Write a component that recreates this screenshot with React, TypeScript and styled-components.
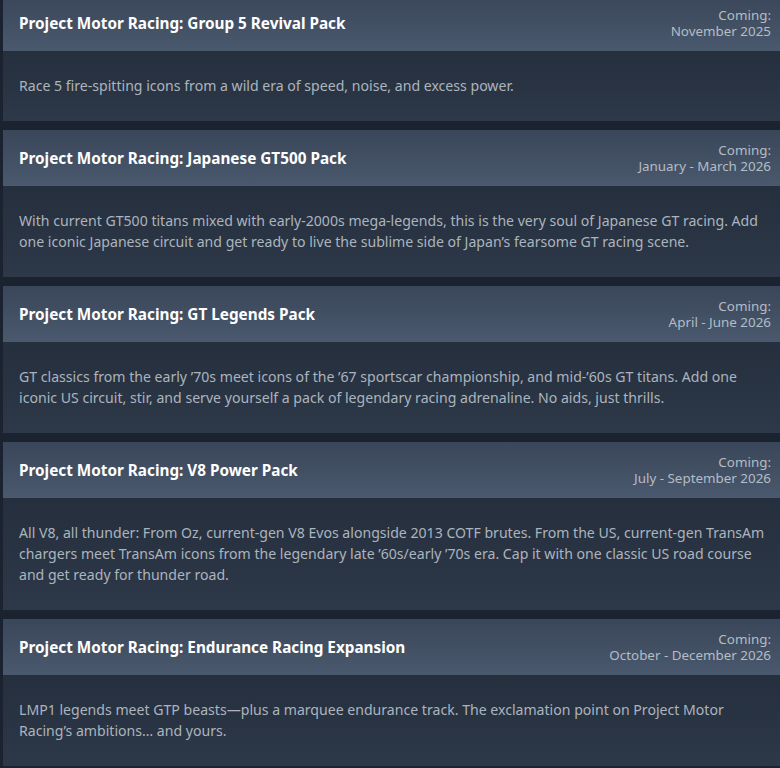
import React from 'react';
import styled, { createGlobalStyle } from 'styled-components';

const GlobalStyle = createGlobalStyle`
  html, body {
    margin: 0;
    padding: 0;
    background: #1b2331;
    overflow: hidden;
  }
`;

type Dlc = { title: string; date: string; text: string };

const items: Dlc[] = [
  {
    title: 'Project Motor Racing: Group 5 Revival Pack',
    date: 'November 2025',
    text: 'Race 5 fire-spitting icons from a wild era of speed, noise, and excess power.',
  },
  {
    title: 'Project Motor Racing: Japanese GT500 Pack',
    date: 'January - March 2026',
    text: 'With current GT500 titans mixed with early-2000s mega-legends, this is the very soul of Japanese GT racing. Add one iconic Japanese circuit and get ready to live the sublime side of Japan\u2019s fearsome GT racing scene.',
  },
  {
    title: 'Project Motor Racing: GT Legends Pack',
    date: 'April - June 2026',
    text: 'GT classics from the early \u201970s meet icons of the \u201967 sportscar championship, and mid-\u201960s GT titans. Add one iconic US circuit, stir, and serve yourself a pack of legendary racing adrenaline. No aids, just thrills.',
  },
  {
    title: 'Project Motor Racing: V8 Power Pack',
    date: 'July - September 2026',
    text: 'All V8, all thunder: From Oz, current-gen V8 Evos alongside 2013 COTF brutes. From the US, current-gen TransAm chargers meet TransAm icons from the legendary late \u201960s/early \u201970s era. Cap it with one classic US road course and get ready for thunder road.',
  },
  {
    title: 'Project Motor Racing: Endurance Racing Expansion',
    date: 'October - December 2026',
    text: 'LMP1 legends meet GTP beasts\u2014plus a marquee endurance track. The exclamation point on Project Motor Racing\u2019s ambitions\u2026 and yours.',
  },
];

const List = styled.div`
  display: flex;
  flex-direction: column;
  gap: 9px;
  margin-top: -5px;
  padding-left: 3px;
  font-family: 'Noto Sans', Arial, sans-serif;
`;

const Card = styled.div`
  display: flex;
  flex-direction: column;
`;

const Header = styled.div`
  display: flex;
  align-items: center;
  justify-content: space-between;
  height: 56px;
  padding: 0 9px 0 16px;
  box-sizing: border-box;
  background: linear-gradient(to bottom, #3a4659 0%, #4a596e 100%);
`;

const Title = styled.div`
  color: #ffffff;
  font-size: 15.3px;
  font-weight: 700;
`;

const When = styled.div`
  display: flex;
  flex-direction: column;
  align-items: flex-end;
  color: #b4bcc6;
  font-size: 13.4px;
  line-height: 16px;
`;

const Body = styled.div`
  padding: 24px 12px 25px 16px;
  background: linear-gradient(to bottom, #252f3e 0%, #2d3848 100%);
  color: #acb4be;
  font-size: 14.1px;
  line-height: 21px;
`;

export default function App() {
  return (
    <>
      <GlobalStyle />
      <List>
        {items.map((d) => (
          <Card key={d.title}>
            <Header>
              <Title>{d.title}</Title>
              <When>
                <span>Coming:</span>
                <span>{d.date}</span>
              </When>
            </Header>
            <Body>{d.text}</Body>
          </Card>
        ))}
      </List>
    </>
  );
}
